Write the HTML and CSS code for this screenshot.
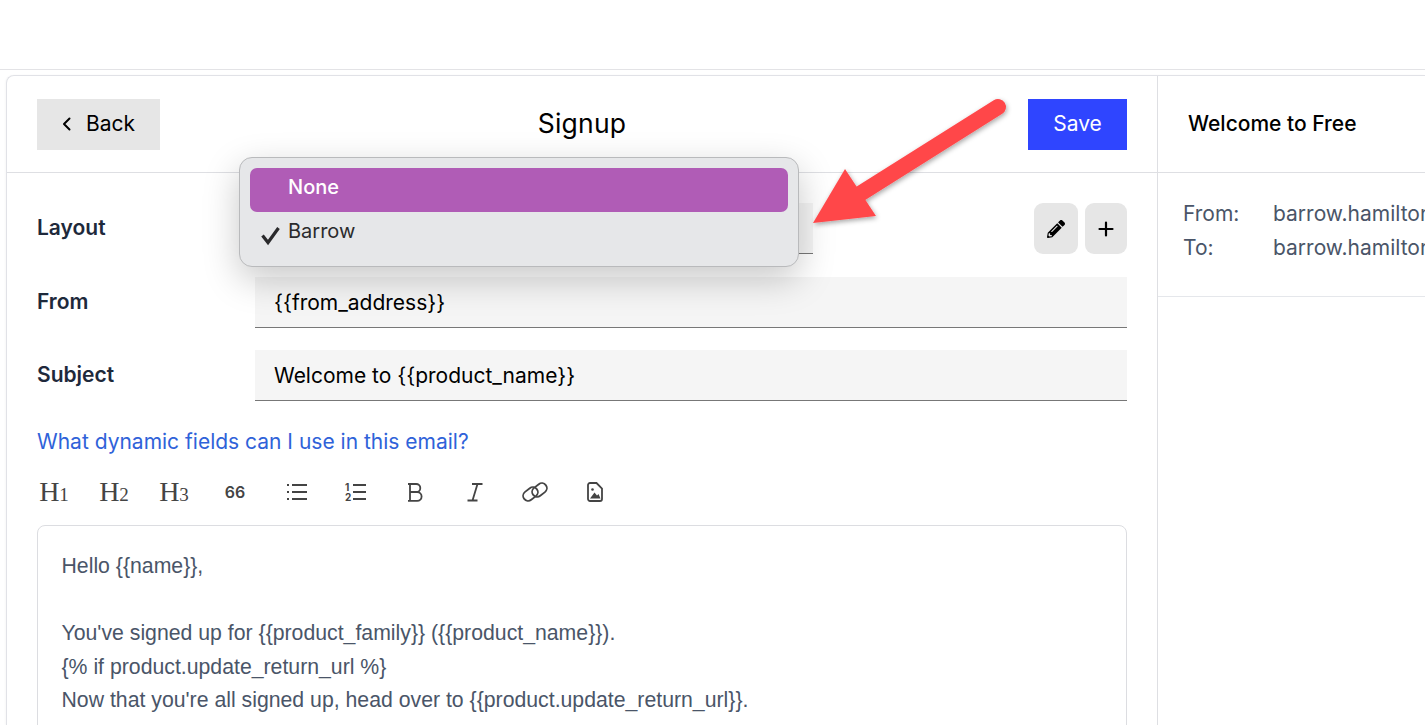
FILE: index.html
```html
<!DOCTYPE html>
<html lang="en">
<head>
<meta charset="utf-8">
<title>Signup</title>
<link rel="stylesheet" href="styles.css">
</head>
<body>
<div class="topbar"></div>
<div class="card">
  <section class="editor-col">
    <header class="head">
      <button class="btn back"><svg class="chev" viewBox="0 0 10 14" width="10" height="14"><path d="M7.500 1.500 2 7l5.500 5.500" fill="none" stroke="#000" stroke-width="2" stroke-linecap="round" stroke-linejoin="round"/></svg><span>Back</span></button>
      <h1 class="title">Signup</h1>
      <button class="btn save">Save</button>
    </header>
    <div class="form">
      <div class="row row-layout">
        <label class="lab">Layout</label>
        <div class="select"></div>
        <div class="tools">
          <button class="sq"><svg viewBox="0 0 512 512" width="18" height="18"><path d="M497.9 142.1l-46.1 46.1c-4.7 4.7-12.3 4.7-17 0l-111-111c-4.7-4.7-4.7-12.3 0-17l46.1-46.1c18.7-18.7 49.1-18.7 67.9 0l60.1 60.1c18.8 18.7 18.8 49.1 0 67.9zM284.2 99.8L21.6 362.4.4 483.9c-2.9 16.4 11.4 30.6 27.8 27.8l121.5-21.3 262.6-262.6c4.7-4.7 4.7-12.3 0-17l-111-111c-4.8-4.7-12.4-4.7-17.1 0zM124.1 339.9c-5.5-5.5-5.5-14.3 0-19.8l154-154c5.5-5.5 14.3-5.5 19.8 0s5.5 14.3 0 19.8l-154 154c-5.5 5.5-14.3 5.5-19.8 0zM88 424h48v36.3l-64.5 11.3-31.1-31.1L51.7 376H88v48z" fill="#000"/></svg></button>
          <button class="sq"><svg viewBox="0 0 16 16" width="16" height="16"><path d="M8 1.500v13M1.500 8h13" stroke="#000" stroke-width="2.200" stroke-linecap="round"/></svg></button>
        </div>
      </div>
      <div class="row">
        <label class="lab">From</label>
        <div class="input">{{from_address}}</div>
      </div>
      <div class="row">
        <label class="lab">Subject</label>
        <div class="input">Welcome to {{product_name}}</div>
      </div>
      <a class="help" href="#">What dynamic fields can I use in this email?</a>
      <div class="toolbar">
        <span class="tb heading">H<small>1</small></span>
        <span class="tb heading">H<small>2</small></span>
        <span class="tb heading">H<small>3</small></span>
        <span class="tb quote">66</span>
        <span class="tb"><svg viewBox="0 0 24 18" width="24" height="18"><path d="M9 2h15M9 9h15M9 16h15" stroke="#444" stroke-width="1.800"/><path d="M4 2h2M4 9h2M4 16h2" stroke="#444" stroke-width="2"/></svg></span>
        <span class="tb"><svg viewBox="0 0 22 20" width="22" height="20"><path d="M9 3h13M9 10h13M9 17h13" stroke="#444" stroke-width="1.800"/><text x="1" y="9" class="ol">1</text><text x="1" y="19" class="ol">2</text></svg></span>
        <span class="tb"><svg viewBox="0 0 18 20" width="18" height="20"><path d="M2 2h8.200a4.100 4.100 0 0 1 0 8.200H4M4 10h7.200a4.400 4.400 0 0 1 0 8.800H2M4 2v16.800" fill="none" stroke="#444" stroke-width="1.800"/></svg></span>
        <span class="tb"><svg viewBox="0 0 18 20" width="18" height="20"><path d="M6 2h10.500M1.500 18.500h10M11.500 2 6.500 18.500" fill="none" stroke="#444" stroke-width="1.800"/></svg></span>
        <span class="tb"><svg viewBox="0 0 26 20" width="26" height="20"><g fill="none" stroke="#444" stroke-width="1.800"><rect x="0.500" y="7" width="16" height="10" rx="5" transform="rotate(-38 8.500 12)"/><rect x="9.500" y="3" width="16" height="10" rx="5" transform="rotate(-38 17.500 8)"/></g></svg></span>
        <span class="tb"><svg viewBox="0 0 16 20" width="16" height="20"><path d="M3 1h6.500L15 6.500V17a2 2 0 0 1-2 2H3a2 2 0 0 1-2-2V3a2 2 0 0 1 2-2z" fill="none" stroke="#444" stroke-width="1.800"/><circle cx="5.500" cy="7.500" r="1.300" fill="#444"/><path d="M3 16.500 7.500 10.500l2.500 3 1.500-1.500 2 4.500z" fill="#444"/></svg></span>
      </div>
      <div class="body-box">
        <p>Hello {{name}},</p>
        <p>&nbsp;</p>
        <p>You've signed up for {{product_family}} ({{product_name}}).</p>
        <p>{% if product.update_return_url %}</p>
        <p>Now that you're all signed up, head over to {{product.update_return_url}}.</p>
      </div>
    </div>
  </section>
  <aside class="preview">
    <div class="pv-head">Welcome to Free</div>
    <dl class="pv-meta">
      <div class="pv-row"><dt>From:</dt><dd>barrow.hamilton</dd></div>
      <div class="pv-row"><dt>To:</dt><dd>barrow.hamilton</dd></div>
    </dl>
  </aside>
</div>
<div class="menu">
  <div class="opt active"><span>None</span></div>
  <div class="opt"><svg class="tick" viewBox="0 0 20 20" width="20" height="20"><path d="M2.500 9.500 8 16.500 18.500 2" fill="none" stroke="#2a2a2c" stroke-width="3.200"/></svg><span>Barrow</span></div>
</div>
<svg class="arrow" width="220" height="150" viewBox="0 0 220 150"><defs><filter id="sh" x="-20%" y="-20%" width="140%" height="140%"><feDropShadow dx="1" dy="2" stdDeviation="2.500" flood-color="#000" flood-opacity=".35"/></filter></defs><g filter="url(#sh)"><path d="M193 17 50 107" stroke="#ff474a" stroke-width="16" stroke-linecap="round"/><path d="M40 79 8 133 71 126z" fill="#ff474a"/></g></svg>
</body>
</html>
```
FILE: styles.css
```css
* { box-sizing: border-box; }
html, body { margin: 0; height: 725px; overflow: hidden; background: #fff; }
body { font-family: Inter, "Liberation Sans", sans-serif; color: #000; position: relative; }
.topbar { height: 70px; border-bottom: 1px solid #e3e3e6; }
.card { margin: 5px 0 0 6px; height: 650px; display: flex; border: 1px solid #e1e2e7; border-right: 0; border-bottom: 0; border-top-left-radius: 8px; box-shadow: -1px 0 2px rgba(0,0,0,.03); }
.editor-col { width: 1151px; flex: none; border-right: 1px solid #dedfe3; overflow: hidden; }
.head { height: 97px; padding: 0 30px; display: grid; grid-template-columns: 1fr auto 1fr; align-items: center; border-bottom: 1px solid #dedfe3; }
.btn { border: 0; height: 51px; font: 400 21px Inter, "Liberation Sans", sans-serif; display: flex; align-items: center; justify-content: center; padding: 0 0 1px; }
.back { width: 123px; background: #e6e6e6; color: #000; gap: 14px; }
.save { width: 99px; background: #2f45ff; color: #fff; justify-self: end; }
.title { margin: 0 0 2px; font-size: 26.500px; font-weight: 400; line-height: 1; letter-spacing: .2px; }
.form { padding: 30px 30px 0; }
.row { display: flex; align-items: flex-start; margin-bottom: 22px; }
.lab { width: 218px; flex: none; font-size: 21px; font-weight: 600; color: #1e293b; line-height: 49px; }
.select { width: 558px; height: 51px; background: #f5f5f5; border-bottom: 1px solid #777; }
.tools { margin-left: auto; display: flex; gap: 7px; }
.sq { width: 44px; height: 51px; border: 0; border-radius: 9px; background: #e6e6e6; display: flex; align-items: center; justify-content: center; padding: 0; }
.sq + .sq { width: 42px; }
.row-layout { margin-bottom: 23px; }
.input { flex: 1; height: 51px; background: #f5f5f5; border-bottom: 1px solid #777; padding: 0 19px; font-size: 21px; line-height: 51px; color: #000; }
.help { display: block; color: #2f62d9; font-size: 21px; line-height: 24px; margin-top: 29px; text-decoration: none; }
.toolbar { display: flex; height: 60px; align-items: center; margin: 8px 0 0 -12px; }
.tb { width: 60px; flex: none; display: flex; align-items: center; justify-content: center; color: #444; }
.heading { font-family: "Liberation Serif", serif; font-size: 28px; line-height: 1; align-items: baseline; padding-right: 2px; }
.heading small { font-size: 19px; }
.quote { font-size: 16px; font-weight: 600; }
.ol { font: 700 10px Inter, sans-serif; fill: #444; }
.body-box { height: 300px; margin-top: 3px; border: 1px solid #dcdde1; border-radius: 8px; padding: 24px 23.500px; font-family: "Liberation Sans", Arial, sans-serif; font-size: 21.250px; line-height: 33.500px; color: #4a5568; }
.body-box p { margin: 0; }
.preview { flex: 1; min-width: 0; overflow: hidden; }
.pv-head { height: 97px; padding-left: 30px; line-height: 96px; font-size: 21px; font-weight: 500; border-bottom: 1px solid #dedfe3; }
.pv-meta { margin: 0; height: 124px; padding: 24px 0 0 25px; border-bottom: 1px solid #e5e7eb; font-size: 21px; color: #4a5568; }
.pv-row { display: flex; line-height: 34px; white-space: nowrap; }
.pv-row dt { width: 90px; flex: none; }
.pv-row dd { margin: 0; }
.menu { position: absolute; left: 239px; top: 157px; width: 560px; height: 110px; padding: 10px; background: #e6e7e9; border: 1px solid #b9babc; border-radius: 13px; box-shadow: 0 12px 36px rgba(0,0,0,.22); font-size: 20px; }
.opt { height: 44px; display: flex; align-items: center; padding: 0 0 6px 38px; position: relative; color: #2b2b2d; border-radius: 7px; }
.opt.active { background: #b05cb6; color: #fff; font-weight: 500; }
.tick { position: absolute; left: 10px; top: 14px; }
.arrow { position: absolute; left: 805px; top: 90px; }
```
